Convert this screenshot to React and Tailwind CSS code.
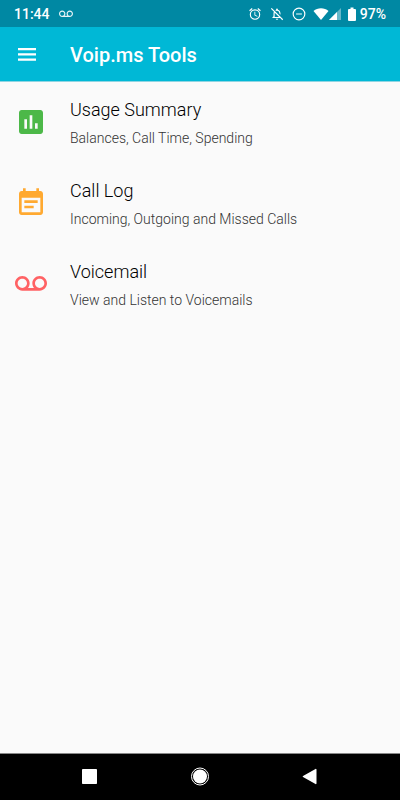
function Icon({ className, children, viewBox = "0 0 24 24" }) {
  return (
    <svg viewBox={viewBox} className={className} fill="currentColor" aria-hidden="true">
      {children}
    </svg>
  );
}

const VOICEMAIL =
  "M18.5 6C15.46 6 13 8.46 13 11.5c0 1.33.47 2.55 1.26 3.5H9.74c.79-.95 1.26-2.17 1.26-3.5C11 8.46 8.54 6 5.5 6S0 8.46 0 11.5 2.46 17 5.5 17h13c3.04 0 5.5-2.46 5.5-5.5S21.54 6 18.5 6zm-13 9C3.57 15 2 13.43 2 11.5S3.57 8 5.5 8 9 9.57 9 11.5 7.43 15 5.5 15zm13 0c-1.93 0-3.5-1.57-3.5-3.5S16.57 8 18.5 8 22 9.57 22 11.5 20.43 15 18.5 15z";

const items = [
  {
    title: "Usage Summary",
    detail: "Balances, Call Time, Spending",
    color: "text-[#4cb848]",
    path: "M19 3H5c-1.1 0-2 .9-2 2v14c0 1.1.9 2 2 2h14c1.1 0 2-.9 2-2V5c0-1.1-.9-2-2-2zM9 17H7v-7h2v7zm4 0h-2V7h2v10zm4 0h-2v-4h2v4z",
  },
  {
    title: "Call Log",
    detail: "Incoming, Outgoing and Missed Calls",
    color: "text-[#ffa930]",
    path: "M17 10H7v2h10v-2zm2-7h-1V1h-2v2H8V1H6v2H5c-1.11 0-1.99.9-1.99 2L3 19c0 1.1.89 2 2 2h14c1.1 0 2-.9 2-2V5c0-1.1-.9-2-2-2zm0 16H5V8h14v11zm-5-5H7v2h7v-2z",
  },
  {
    title: "Voicemail",
    detail: "View and Listen to Voicemails",
    color: "text-[#ff6264]",
    path: VOICEMAIL,
  },
];

function StatusBar() {
  return (
    <div className="flex h-[27px] items-center bg-[#0088a3] pl-3.5 pr-3.5 text-sm font-medium text-white">
      <span>11:44</span>
      <Icon className="ml-[9px] size-3.5 text-white/90">
        <path d={VOICEMAIL} />
      </Icon>
      <div className="ml-auto flex items-center">
        <Icon className="mr-2 size-3.5">
          <path d="M22 5.7l-4.6-3.9-1.3 1.5 4.6 3.9L22 5.7zM7.9 3.4L6.6 1.9 2 5.7l1.3 1.5 4.6-3.8zM12.5 8H11v6l4.7 2.9.8-1.2-4-2.4V8zM12 4a9 9 0 1 0 0 18 9 9 0 0 0 0-18zm0 16a7 7 0 1 1 0-14 7 7 0 0 1 0 14z" />
        </Icon>
        <Icon className="mr-2 size-3.5">
          <path d="M12 22c1.1 0 2-.9 2-2h-4c0 1.1.9 2 2 2zm0-15.5c2.500 0 4 2 4 4.500v.1l2 2V11c0-3.100-1.600-5.600-4.500-6.300V4a1.500 1.500 0 0 0-3 0v.7c-.5.1-1 .3-1.500.6l1.500 1.500c.5-.2 1-.3 1.500-.3zM3 1.500L1.500 3l5.200 5.200C6.200 9 6 10 6 11v5l-2 2v1h13.500l3.500 3.500 1.500-1.500L3 1.500zM16 17H8v-6c0-.5.100-.900.200-1.300L15.500 17h.5z" />
        </Icon>
        <Icon className="mr-[7px] size-3.5">
          <path d="M7 11h10v2H7zM12 1a11 11 0 1 0 0 22 11 11 0 0 0 0-22zm0 20a9 9 0 1 1 0-18 9 9 0 0 1 0 18z" />
        </Icon>
        <Icon className="h-3 w-4" viewBox="0 0 16 12">
          <path d="M8 12L.5 3C4.500-.8 11.500-.8 15.500 3z" />
        </Icon>
        <Icon className="mr-[7px] size-3" viewBox="0 0 12 12">
          <path d="M0 12L12 0v12z" opacity=".4" />
          <path d="M0 12l8-8v8z" />
        </Icon>
        <Icon className="mr-1 h-3.5 w-2" viewBox="0 0 8 14">
          <path d="M2.500.5h3v1.500H7a1 1 0 0 1 1 1v10a1 1 0 0 1-1 1H1a1 1 0 0 1-1-1V3a1 1 0 0 1 1-1h1.500z" />
        </Icon>
        <span>97%</span>
      </div>
    </div>
  );
}

function NavBar() {
  return (
    <nav className="flex h-[47px] items-center justify-center gap-[86px] border-t border-[#888] bg-black text-white">
      <button aria-label="Recent apps" className="size-6">
        <Icon className="size-6">
          <rect x="4" y="4" width="15" height="15" rx=".8" />
        </Icon>
      </button>
      <button aria-label="Home" className="size-6">
        <Icon className="size-6">
          <circle cx="12" cy="11.500" r="8.500" fill="none" stroke="currentColor" />
          <circle cx="12" cy="11.500" r="7" />
        </Icon>
      </button>
      <button aria-label="Back" className="size-6">
        <Icon className="size-6">
          <path d="M18.500 4.500v14a.6.6 0 0 1-1 .500L5 12a.6.6 0 0 1 0-1l12.500-7a.6.6 0 0 1 1 .5z" />
        </Icon>
      </button>
    </nav>
  );
}

export default function App() {
  return (
    <div className="flex min-h-screen flex-col bg-[#fafafa] font-[Roboto,sans-serif]">
      <StatusBar />
      <header className="flex h-[55px] items-center gap-[31px] border-b border-[#8fd5e2] bg-[#00b8d6] pl-[15px] pt-px text-white">
        <button aria-label="Open menu" className="size-6">
          <Icon className="size-6">
            <path d="M3 17.700h18v-2.200H3v2.200zm0-5.200h18v-2.200H3v2.200zm0-7.500v2.200h18V5H3z" />
          </Icon>
        </button>
        <h1 className="text-xl font-medium">Voip.ms Tools</h1>
      </header>
      <main className="flex-1">
        <ul>
          {items.map((item) => (
            <li key={item.title}>
              <button className="flex h-[81px] w-full items-center gap-[23px] pl-[15px] text-left">
                <Icon className={`mb-px size-8 shrink-0 ${item.color}`}>
                  <path d={item.path} />
                </Icon>
                <span className="flex flex-col gap-1.5">
                  <span className="text-lg font-light leading-6 text-black">{item.title}</span>
                  <span className="text-sm font-light leading-5 text-[#333]">{item.detail}</span>
                </span>
              </button>
            </li>
          ))}
        </ul>
      </main>
      <NavBar />
    </div>
  );
}
